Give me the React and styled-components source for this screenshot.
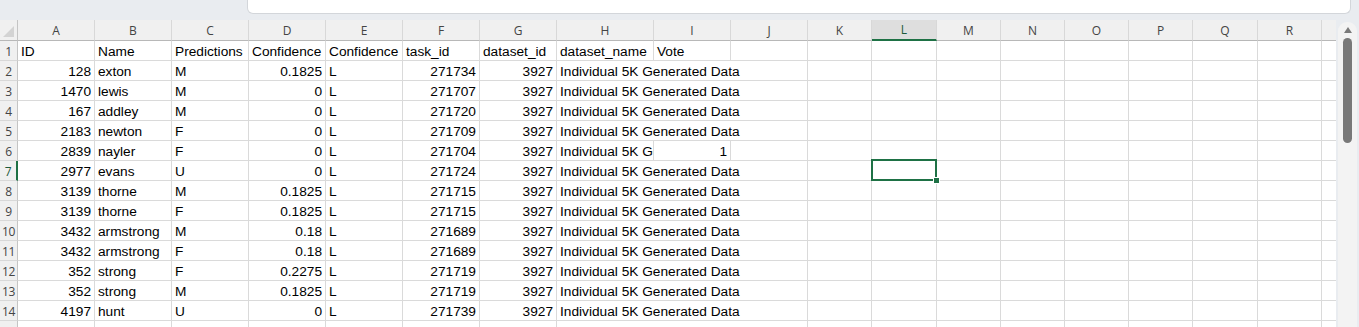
import React from "react";
import styled, { createGlobalStyle, css } from "styled-components";

const GREEN = "#1e7145";
const GRID = "#dadada";

const Global = createGlobalStyle`
  html, body { margin: 0; padding: 0; background: #e9ecf0; }
  body { overflow: hidden; }
`;

const Page = styled.div`
  width: 1359px;
  height: 327px;
  background: #e9ecf0;
  overflow: hidden;
  display: flex;
  flex-direction: column;
`;

const TopBar = styled.div`
  height: 20px;
  flex: none;
  display: flex;
  padding-left: 247px;
  padding-right: 8px;
`;

const FormulaBox = styled.div`
  flex: 1;
  height: 13px;
  background: #fff;
  border: 1px solid #d3d6da;
  border-top: none;
  border-radius: 0 0 6px 6px;
`;

const Body = styled.div`
  flex: 1;
  display: flex;
  overflow: hidden;
`;

const Sheet = styled.div`
  width: 1336px;
  flex: none;
  overflow: hidden;
  display: grid;
  grid-template-columns: 18px repeat(7, 77px) 97px 77px 77px 64px 65px 64px 64px 64px 64px 65px 64px 64px;
  grid-template-rows: 21px;
  grid-auto-rows: 20px;
  align-content: start;
  background: #fff;
`;

const Corner = styled.div`
  position: relative;
  background: #f0f0f0;
  border-right: 1px solid #c4c4c4;
  border-bottom: 1px solid #b8b8b8;
  box-sizing: border-box;
  &::after {
    content: "";
    position: absolute;
    right: 3px;
    bottom: 3px;
    width: 11px;
    height: 11px;
    background: #d3d3d3;
    clip-path: polygon(100% 0, 100% 100%, 0 100%);
  }
`;

const ColHead = styled.div`
  box-sizing: border-box;
  display: flex;
  align-items: center;
  justify-content: center;
  background: ${(p) => (p.$active ? "#dedede" : "#f0f0f0")};
  border-right: 1px solid #d8d8d8;
  border-bottom: ${(p) => (p.$active ? `2px solid ${GREEN}` : "1px solid #b8b8b8")};
  font-family: "Open Sans", "Noto Sans", sans-serif;
  font-size: 12px;
  color: ${(p) => (p.$active ? "#1d5a3b" : "#444")};
  white-space: nowrap;
  overflow: hidden;
`;

const RowHead = styled.div`
  box-sizing: border-box;
  display: flex;
  align-items: center;
  justify-content: center;
  background: #f0f0f0;
  border-right: ${(p) => (p.$active ? `2px solid ${GREEN}` : "1px solid #c4c4c4")};
  border-bottom: 1px solid #d8d8d8;
  font-family: "Open Sans", "Noto Sans", sans-serif;
  font-size: 12px;
  letter-spacing: -0.3px;
  color: ${(p) => (p.$active ? "#1d5a3b" : "#444")};
  padding-top: 1px;
`;

const Cell = styled.div`
  box-sizing: border-box;
  min-width: 0;
  border-right: 1px solid ${GRID};
  border-bottom: 1px solid ${GRID};
  background: #fff;
  font-family: "Liberation Sans", Arial, sans-serif;
  font-size: 13.7px;
  line-height: 17px;
  padding: 2px 3px 0 3px;
  color: #000;
  white-space: nowrap;
  overflow: hidden;
  text-align: ${(p) => (p.$right ? "right" : "left")};
  ${(p) => p.$span && css`grid-column: span ${p.$span};`}
  ${(p) =>
    p.$selected &&
    css`
      position: relative;
      overflow: visible;
      z-index: 2;
      &::after {
        content: "";
        position: absolute;
        left: -1px;
        top: -2px;
        right: -1px;
        bottom: -1px;
        border: 2px solid ${GREEN};
      }
      &::before {
        content: "";
        position: absolute;
        right: -4px;
        bottom: -4px;
        width: 5px;
        height: 5px;
        background: ${GREEN};
        border: 1px solid #fff;
        z-index: 3;
      }
    `}
`;

const ScrollTrack = styled.div`
  width: 19px;
  flex: none;
  margin-left: 2px;
  margin-top: 2px;
  background: #f3f3f3;
  border-radius: 9px 9px 0 0;
  display: flex;
  flex-direction: column;
  align-items: center;
  padding-top: 5px;
  box-sizing: border-box;
`;

const ArrowUp = styled.div`
  width: 0;
  height: 0;
  border-left: 4.5px solid transparent;
  border-right: 4.5px solid transparent;
  border-bottom: 6px solid #7a7a7a;
`;

const Thumb = styled.div`
  margin-top: 5px;
  width: 9px;
  height: 105px;
  border-radius: 5px;
  background: #787878;
`;

const COLS = ["A", "B", "C", "D", "E", "F", "G", "H", "I", "J", "K", "L", "M", "N", "O", "P", "Q", "R", "S"];
const GEN = "Individual 5K Generated Data";

const ROWS = [
  ["ID", "Name", "Predictions", "Confidence", "Confidence", "task_id", "dataset_id", "dataset_name", "Vote"],
  [128, "exton", "M", 0.1825, "L", 271734, 3927, GEN, ""],
  [1470, "lewis", "M", 0, "L", 271707, 3927, GEN, ""],
  [167, "addley", "M", 0, "L", 271720, 3927, GEN, ""],
  [2183, "newton", "F", 0, "L", 271709, 3927, GEN, ""],
  [2839, "nayler", "F", 0, "L", 271704, 3927, GEN, 1],
  [2977, "evans", "U", 0, "L", 271724, 3927, GEN, ""],
  [3139, "thorne", "M", 0.1825, "L", 271715, 3927, GEN, ""],
  [3139, "thorne", "F", 0.1825, "L", 271715, 3927, GEN, ""],
  [3432, "armstrong", "M", 0.18, "L", 271689, 3927, GEN, ""],
  [3432, "armstrong", "F", 0.18, "L", 271689, 3927, GEN, ""],
  [352, "strong", "F", 0.2275, "L", 271719, 3927, GEN, ""],
  [352, "strong", "M", 0.1825, "L", 271719, 3927, GEN, ""],
  [4197, "hunt", "U", 0, "L", 271739, 3927, GEN, ""],
  [4203, "stone", "M", 0, "L", 271716, 3927, GEN, ""],
  ["", "", "", "", "", "", "", "", ""],
];

const SEL_ROW = 7;
const SEL_COL = "L";

function DataCell({ v, span }) {
  const isNum = typeof v === "number";
  return (
    <Cell $right={isNum} $span={span}>
      {v === "" ? "" : String(v)}
    </Cell>
  );
}

function SheetRow({ row, n }) {
  const cells = [];
  for (let i = 0; i < 7; i++) cells.push(<DataCell key={i} v={row[i]} />);
  if (row[8] === "" && row[7] !== "") {
    cells.push(<DataCell key="H" v={row[7]} span={3} />);
  } else {
    cells.push(<DataCell key="H" v={row[7]} />);
    cells.push(<DataCell key="I" v={row[8]} />);
    cells.push(<DataCell key="J" v="" />);
  }
  COLS.slice(10).forEach((c) =>
    cells.push(<Cell key={c} $selected={n === SEL_ROW && c === SEL_COL} />)
  );
  return (
    <>
      <RowHead $active={n === SEL_ROW}>{n}</RowHead>
      {cells}
    </>
  );
}

export default function App() {
  return (
    <Page>
      <Global />
      <TopBar>
        <FormulaBox />
      </TopBar>
      <Body>
        <Sheet>
          <Corner />
          {COLS.map((c) => (
            <ColHead key={c} $active={c === SEL_COL}>
              {c}
            </ColHead>
          ))}
          {ROWS.map((row, i) => (
            <SheetRow key={i} row={row} n={i + 1} />
          ))}
        </Sheet>
        <ScrollTrack>
          <ArrowUp />
          <Thumb />
        </ScrollTrack>
      </Body>
    </Page>
  );
}
